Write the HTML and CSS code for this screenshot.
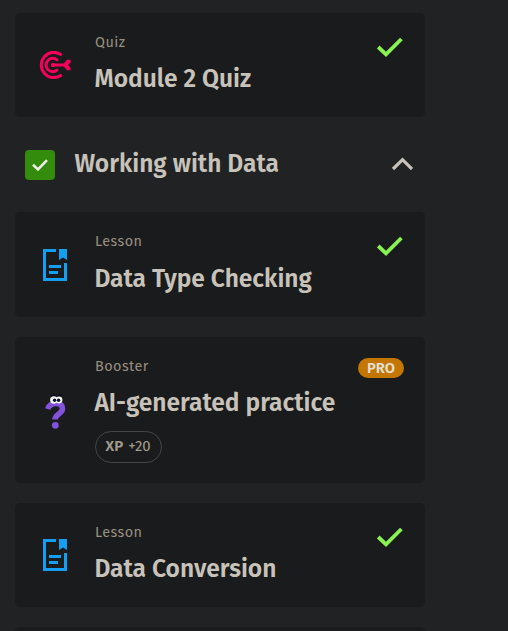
FILE: index.html
```
<!DOCTYPE html>
<html lang="en">
<head>
<meta charset="utf-8">
<title>Course modules</title>
<link rel="stylesheet" href="styles.css">
</head>
<body>
<svg class="defs" aria-hidden="true">
  <symbol id="done" viewBox="0 0 28 22"><path d="M2.2 11 10 18.3 25.4 3" fill="none" stroke="#88f251" stroke-width="3.8"/></symbol>
  <symbol id="lesson" viewBox="0 0 24 32"><path d="M13 1.5H1.5v29h21V14M6 17.5h12M6 23.5h9" fill="none" stroke="#149ff2" stroke-width="3"/><path d="M16 0h8v11l-4-2.5-4 2.5z" fill="#149ff2"/></symbol>
</svg>
<main class="course">
  <article class="card">
    <div class="icon"><svg width="32" height="30" viewBox="0 0 32 30"><g fill="none" stroke="#f6005c" stroke-width="3" stroke-linecap="round"><path d="M21.7 3.4A12.600 12.600 0 1 0 21.7 24.600"/><path d="M18 8.800A6.700 6.700 0 1 0 18 19.200"/><path d="M14 14h12" stroke-width="3"/></g><circle cx="14" cy="14" r="2.200" fill="#f6005c"/><path d="m23.500 14 4.500-5.300h3.500v2.800L29 14l2.500 2.500v2.800H28z" fill="#f6005c"/></svg></div>
    <div class="info"><p class="kind">Quiz</p><h3 class="title">Module 2 Quiz</h3></div>
    <svg class="done"><use href="#done"/></svg>
  </article>
  <header class="section">
    <span class="checkbox"><svg width="18" height="14" viewBox="0 0 18 14"><path d="m2 6.800 5 4.600L16 2.200" fill="none" stroke="#eeece4" stroke-width="2.600"/></svg></span>
    <h2 class="title">Working with Data</h2>
    <svg class="chevron" viewBox="0 0 22 14"><path d="M2 12 11.500 2.700 21 12" fill="none" stroke="#c8c3ba" stroke-width="3.200"/></svg>
  </header>
  <article class="card lesson-first">
    <div class="icon"><svg width="24" height="32"><use href="#lesson"/></svg></div>
    <div class="info"><p class="kind">Lesson</p><h3 class="title">Data Type Checking</h3></div>
    <svg class="done"><use href="#done"/></svg>
  </article>
  <article class="card booster">
    <div class="icon"><svg width="24" height="36" viewBox="0 0 24 36"><path d="M3.700 15C5 11 8 9.500 12 9.500c4.500 0 6.500 2 6.500 5.100 0 5.500-7.500 5.200-7.500 11" fill="none" stroke="#8352dc" stroke-width="5.600"/><circle cx="11.300" cy="31.300" r="3.400" fill="#8352dc"/><path d="m7 2.500 4-1.500M14 1.500h4" stroke="#050c24" stroke-width="2"/><circle cx="9.800" cy="6" r="3.700" fill="#f4f2ee"/><circle cx="15" cy="6" r="3.400" fill="#f4f2ee"/><circle cx="10.600" cy="6.300" r="1.700" fill="#07122d"/><circle cx="14.600" cy="6.300" r="1.700" fill="#07122d"/></svg></div>
    <div class="info"><p class="kind">Booster</p><h3 class="title">AI-generated practice</h3><span class="xp"><b>XP</b> +20</span></div>
    <span class="pro">PRO</span>
  </article>
  <article class="card">
    <div class="icon"><svg width="24" height="32"><use href="#lesson"/></svg></div>
    <div class="info"><p class="kind">Lesson</p><h3 class="title">Data Conversion</h3></div>
    <svg class="done"><use href="#done"/></svg>
  </article>
  <article class="card"></article>
</main>
</body>
</html>
```
FILE: styles.css
```
* { box-sizing: border-box; }
body { margin: 0; background: #202223; color: #c8c3ba; font-family: "Fira Sans", "Noto Sans", sans-serif; }
.defs { display: none; }
.course { width: 410px; height: 631px; padding-top: 13px; margin-left: 15px; overflow: hidden; }
.card { display: flex; align-items: flex-start; height: 104px; margin-bottom: 20px; padding: 20px 20px 0 0; border-radius: 5px; background: #1a1b1c; }
.lesson-first { height: 105px; }
.booster { height: 146px; }
.icon { flex: 0 0 80px; height: 64px; display: flex; align-items: center; justify-content: center; }
.card:first-child .icon { padding: 1px 1px 0 0; }
.lesson-first .icon { height: 66px; }
.booster .icon { height: 110px; padding-left: 1px; }
.info { flex: 1; min-width: 0; }
.kind { margin: 1px 0 0; font-size: 14.4px; line-height: 18px; letter-spacing: .45px; color: #988f81; }
.title { margin: 0 0 0 -.6px; font-size: 24.55px; font-weight: 600; line-height: 36px; white-space: nowrap; }
.info .title { margin-top: 9px; }
.lesson-first .info .title { margin-top: 10px; }
.done { flex: none; width: 28px; height: 22px; margin: 3px 1px 0 0; }
.section { display: flex; align-items: center; height: 75px; padding: 0 12px 0 10px; margin: -10px 0 10px; }
.checkbox { display: flex; align-items: center; justify-content: center; width: 30px; height: 30px; margin-right: 20px; border-radius: 4px; background: #338c0b; }
.section .title { flex: 1; padding-bottom: 2px; }
.chevron { width: 22px; height: 14px; margin-bottom: 2px; }
.xp { display: block; width: 67px; height: 32px; margin-top: 10px; padding-left: 9.5px; border: 1px solid #454545; border-radius: 16px; font-size: 15px; line-height: 29px; color: #a39b8d; white-space: nowrap; }
.xp b { font-weight: 600; letter-spacing: .2px; margin-right: 1px; }
.pro { width: 46px; height: 20px; margin: 1px 1px 0 0; border-radius: 10px; background: #c47700; color: #e5ded1; font-size: 14.8px; font-weight: 600; line-height: 21px; text-align: center; }
```
